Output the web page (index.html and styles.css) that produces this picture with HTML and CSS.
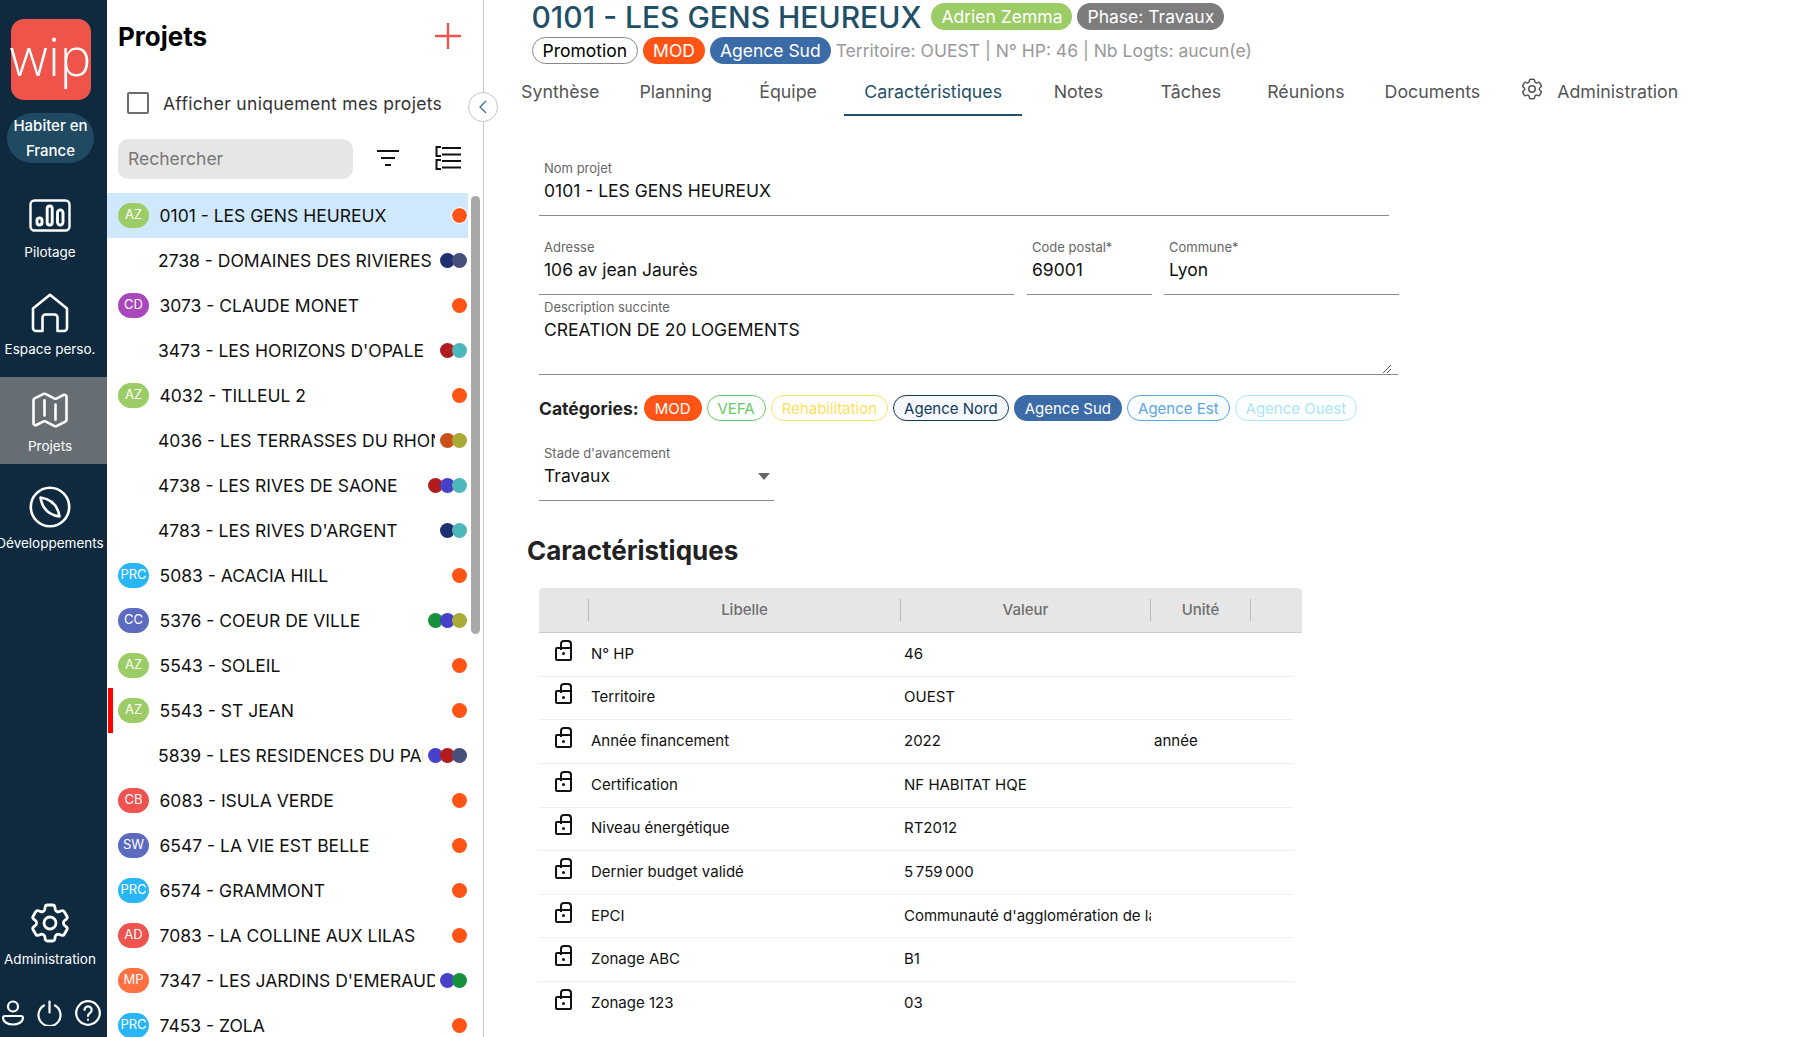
FILE: index.html
```html
<!DOCTYPE html>
<html lang="fr">
<head>
<meta charset="utf-8">
<title>Projets</title>
<link rel="stylesheet" href="styles.css">
</head>
<body>
<div class="app">
  <nav class="rail">
    <div class="logo"><span class="logo-text">wip</span></div>
    <div class="org">Habiter en France</div>
    <a class="rail-item">
      <span class="rail-icon"><svg width="42" height="34" viewBox="0 0 42 34" fill="none" stroke="#fff" stroke-width="2.4"><rect x="1.5" y="1.5" width="39" height="30" rx="4"/><g stroke-width="2.900"><rect x="8" y="19" width="5" height="7" rx="2.500"/><rect x="18.200" y="7" width="5" height="19" rx="2.500"/><rect x="28.500" y="11" width="5.500" height="15" rx="2.700"/></g></svg></span>
      <span class="rail-label">Pilotage</span>
    </a>
    <a class="rail-item">
      <span class="rail-icon"><svg width="38" height="40" viewBox="0 0 38 40" fill="none" stroke="#fff" stroke-width="2.6" stroke-linejoin="round"><path d="M19 1.8 2 15.5V35a3 3 0 0 0 3 3h6.5V24.5a3 3 0 0 1 3-3h9a3 3 0 0 1 3 3V38H33a3 3 0 0 0 3-3V15.5Z"/></svg></span>
      <span class="rail-label">Espace perso.</span>
    </a>
    <a class="rail-item active">
      <span class="rail-icon"><svg width="44" height="44" viewBox="0 0 24 24" fill="none" stroke="#fff" stroke-width="1.4" stroke-linecap="round" stroke-linejoin="round"><path d="M9 6.75V15m6-6v8.25m.503 3.498l4.875-2.437c.381-.19.622-.58.622-1.006V4.82c0-.836-.88-1.38-1.628-1.006l-3.869 1.934c-.317.159-.69.159-1.006 0L9.503 3.252a1.125 1.125 0 00-1.006 0L3.622 5.689C3.24 5.88 3 6.27 3 6.695V19.18c0 .836.88 1.38 1.628 1.006l3.869-1.934c.317-.159.69-.159 1.006 0l4.994 2.497c.317.158.69.158 1.006 0z"/></svg></span>
      <span class="rail-label">Projets</span>
    </a>
    <a class="rail-item">
      <span class="rail-icon"><svg width="42" height="42" viewBox="0 0 42 42" fill="none" stroke="#fff" stroke-width="2.6" stroke-linejoin="round"><circle cx="21" cy="21" r="19.2"/><path d="M11.5 11.5Q28 14 30.500 30.500Q14 28 11.500 11.500Z"/></svg></span>
      <span class="rail-label">Développements</span>
    </a>
    <a class="rail-item rail-admin">
      <span class="rail-icon"><svg width="48" height="48" viewBox="0 0 24 24" fill="none" stroke="#fff" stroke-width="1.4" stroke-linecap="round" stroke-linejoin="round"><path d="M9.594 3.94c.09-.542.56-.94 1.11-.94h2.593c.55 0 1.02.398 1.11.94l.213 1.281c.063.374.313.686.645.87.074.04.147.083.22.127.324.196.72.257 1.075.124l1.217-.456a1.125 1.125 0 011.37.49l1.296 2.247a1.125 1.125 0 01-.26 1.431l-1.003.827c-.293.24-.438.613-.431.992a6.759 6.759 0 010 .255c-.007.378.138.75.43.99l1.005.828c.424.35.534.954.26 1.43l-1.298 2.247a1.125 1.125 0 01-1.369.491l-1.217-.456c-.355-.133-.75-.072-1.076.124a6.57 6.57 0 01-.22.128c-.331.183-.581.495-.644.869l-.213 1.28c-.09.543-.56.941-1.11.941h-2.594c-.55 0-1.02-.398-1.11-.94l-.213-1.281c-.062-.374-.312-.686-.644-.87a6.52 6.52 0 01-.22-.127c-.325-.196-.72-.257-1.076-.124l-1.217.456a1.125 1.125 0 01-1.369-.49l-1.297-2.247a1.125 1.125 0 01.26-1.431l1.004-.827c.292-.24.437-.613.43-.992a6.932 6.932 0 010-.255c.007-.378-.138-.75-.43-.99l-1.004-.828a1.125 1.125 0 01-.26-1.43l1.297-2.247a1.125 1.125 0 011.37-.491l1.216.456c.356.133.751.072 1.076-.124.072-.044.146-.087.22-.128.332-.183.582-.495.644-.869l.214-1.281z"/><path d="M15 12a3 3 0 11-6 0 3 3 0 016 0z"/></svg></span>
      <span class="rail-label">Administration</span>
    </a>
    <div class="rail-bottom">
      <svg width="22" height="26" viewBox="0 0 22 26" fill="none" stroke="#fff" stroke-width="2.2"><circle cx="11" cy="6.500" r="5"/><path d="M3 16h16a2 2 0 0 1 2 2c0 4-5 6.500-10 6.500S1 22 1 18a2 2 0 0 1 2-2Z"/></svg>
      <svg width="25" height="26" viewBox="0 0 25 26" fill="none" stroke="#fff" stroke-width="2.2" stroke-linecap="round"><path d="M7 5.500a11 11 0 1 0 11 0"/><path d="M12.500 1.500v11"/></svg>
      <svg width="26" height="26" viewBox="0 0 26 26" fill="none" stroke="#fff" stroke-width="2.2" stroke-linecap="round"><circle cx="13" cy="13" r="11.800"/><path d="M9.500 10a3.600 3.600 0 1 1 5.500 3c-1.400.9-2 1.400-2 3"/><path d="M13 19.600v.2"/></svg>
    </div>
  </nav>

  <aside class="panel">
    <div class="panel-head">
      <h1 class="panel-title">Projets</h1>
      <svg class="plus" width="28" height="28" viewBox="0 0 28 28" stroke="#ef5350" stroke-width="2.400"><path d="M14 1v26M1 14h26"/></svg>
    </div>
    <label class="mine"><span class="box"></span><span>Afficher uniquement mes projets</span></label>
    <div class="search-row">
      <div class="search">Rechercher</div>
      <svg class="filter" width="22" height="16" viewBox="0 0 22 16" stroke="#111" stroke-width="2"><path d="M0 1h22M4 8h14M8 15h6"/></svg>
      <svg class="listicon" width="26" height="24" viewBox="0 0 26 24" fill="none" stroke="#111" stroke-width="2"><path d="M6 1H1.500v9H6M6 14H1.500v9H6M7 2h19M7 8.500h19M7 15h19M7 21.500h19"/></svg>
    </div>
    <div class="list-wrap">
      <ul class="list">
        <li class="row selected"><span class="av az">AZ</span><span class="name">0101 - LES GENS HEUREUX</span><span class="dots ring"><i class="d or"></i></span></li>
        <li class="row"><span class="av none"></span><span class="name">2738 - DOMAINES DES RIVIERES</span><span class="dots"><i class="d nv"></i><i class="d sl"></i></span></li>
        <li class="row"><span class="av cd">CD</span><span class="name">3073 - CLAUDE MONET</span><span class="dots"><i class="d or"></i></span></li>
        <li class="row"><span class="av none"></span><span class="name">3473 - LES HORIZONS D'OPALE</span><span class="dots"><i class="d cr"></i><i class="d te"></i></span></li>
        <li class="row"><span class="av az">AZ</span><span class="name">4032 - TILLEUL 2</span><span class="dots"><i class="d or"></i></span></li>
        <li class="row"><span class="av none"></span><span class="name">4036 - LES TERRASSES DU RHONE</span><span class="dots"><i class="d ru"></i><i class="d ol"></i></span></li>
        <li class="row"><span class="av none"></span><span class="name">4738 - LES RIVES DE SAONE</span><span class="dots"><i class="d cr"></i><i class="d in"></i><i class="d te"></i></span></li>
        <li class="row"><span class="av none"></span><span class="name">4783 - LES RIVES D'ARGENT</span><span class="dots"><i class="d nv"></i><i class="d te"></i></span></li>
        <li class="row"><span class="av prc">PRC</span><span class="name">5083 - ACACIA HILL</span><span class="dots"><i class="d or"></i></span></li>
        <li class="row"><span class="av cc">CC</span><span class="name">5376 - COEUR DE VILLE</span><span class="dots"><i class="d gr"></i><i class="d in"></i><i class="d ol"></i></span></li>
        <li class="row"><span class="av az">AZ</span><span class="name">5543 - SOLEIL</span><span class="dots"><i class="d or"></i></span></li>
        <li class="row flagged"><span class="av az">AZ</span><span class="name">5543 - ST JEAN</span><span class="dots"><i class="d or"></i></span></li>
        <li class="row"><span class="av none"></span><span class="name">5839 - LES RESIDENCES DU PARC</span><span class="dots"><i class="d in"></i><i class="d cr"></i><i class="d sl"></i></span></li>
        <li class="row"><span class="av cb">CB</span><span class="name">6083 - ISULA VERDE</span><span class="dots"><i class="d or"></i></span></li>
        <li class="row"><span class="av cc">SW</span><span class="name">6547 - LA VIE EST BELLE</span><span class="dots"><i class="d or"></i></span></li>
        <li class="row"><span class="av prc">PRC</span><span class="name">6574 - GRAMMONT</span><span class="dots"><i class="d or"></i></span></li>
        <li class="row"><span class="av cb">AD</span><span class="name">7083 - LA COLLINE AUX LILAS</span><span class="dots"><i class="d or"></i></span></li>
        <li class="row"><span class="av mp">MP</span><span class="name">7347 - LES JARDINS D'EMERAUDE</span><span class="dots"><i class="d in"></i><i class="d gr"></i></span></li>
        <li class="row"><span class="av prc">PRC</span><span class="name">7453 - ZOLA</span><span class="dots"><i class="d or"></i></span></li>
      </ul>
      <div class="thumb"></div>
    </div>
    <button class="collapse"><svg width="10" height="16" viewBox="0 0 10 16" fill="none" stroke="#3f6f8c" stroke-width="1.300"><path d="M8 2 2 8l6 6"/></svg></button>
  </aside>

  <main class="main">
    <header class="head">
      <div class="title-row">
        <h2 class="title">0101 - LES GENS HEUREUX</h2>
        <span class="chip big c-green">Adrien Zemma</span>
        <span class="chip big c-gray">Phase: Travaux</span>
      </div>
      <div class="sub-row">
        <span class="chip big c-outline">Promotion</span>
        <span class="chip big c-orange">MOD</span>
        <span class="chip big c-blue">Agence Sud</span>
        <span class="meta">Territoire: OUEST | N° HP: 46 | Nb Logts: aucun(e)</span>
      </div>
    </header>
    <div class="tabs">
      <a class="tab">Synthèse</a>
      <a class="tab">Planning</a>
      <a class="tab">Équipe</a>
      <a class="tab on">Caractéristiques</a>
      <a class="tab">Notes</a>
      <a class="tab">Tâches</a>
      <a class="tab">Réunions</a>
      <a class="tab">Documents</a>
      <a class="tab tab-admin"><svg width="26" height="26" viewBox="0 0 24 24" fill="none" stroke="#555" stroke-width="1.400" stroke-linecap="round" stroke-linejoin="round"><path d="M9.594 3.94c.09-.542.56-.94 1.11-.94h2.593c.55 0 1.02.398 1.11.94l.213 1.281c.063.374.313.686.645.87.074.04.147.083.22.127.324.196.72.257 1.075.124l1.217-.456a1.125 1.125 0 011.37.49l1.296 2.247a1.125 1.125 0 01-.26 1.431l-1.003.827c-.293.24-.438.613-.431.992a6.759 6.759 0 010 .255c-.007.378.138.75.43.99l1.005.828c.424.35.534.954.26 1.43l-1.298 2.247a1.125 1.125 0 01-1.369.491l-1.217-.456c-.355-.133-.75-.072-1.076.124a6.57 6.57 0 01-.22.128c-.331.183-.581.495-.644.869l-.213 1.28c-.09.543-.56.941-1.11.941h-2.594c-.55 0-1.02-.398-1.11-.94l-.213-1.281c-.062-.374-.312-.686-.644-.87a6.52 6.52 0 01-.22-.127c-.325-.196-.72-.257-1.076-.124l-1.217.456a1.125 1.125 0 01-1.369-.49l-1.297-2.247a1.125 1.125 0 01.26-1.431l1.004-.827c.292-.24.437-.613.43-.992a6.932 6.932 0 010-.255c.007-.378-.138-.75-.43-.99l-1.004-.828a1.125 1.125 0 01-.26-1.43l1.297-2.247a1.125 1.125 0 011.37-.491l1.216.456c.356.133.751.072 1.076-.124.072-.044.146-.087.22-.128.332-.183.582-.495.644-.869l.214-1.281z"/><path d="M15 12a3 3 0 11-6 0 3 3 0 016 0z"/></svg>Administration</a>
    </div>
    <section class="form">
      <div class="form-row r1">
        <div class="field f-name"><span class="lbl">Nom projet</span><span class="val">0101 - LES GENS HEUREUX</span></div>
      </div>
      <div class="form-row r2">
        <div class="field f-addr"><span class="lbl">Adresse</span><span class="val">106 av jean Jaurès</span></div>
        <div class="field f-cp"><span class="lbl">Code postal*</span><span class="val">69001</span></div>
        <div class="field f-city"><span class="lbl">Commune*</span><span class="val">Lyon</span></div>
      </div>
      <div class="form-row r3">
        <div class="field f-desc"><span class="lbl">Description succinte</span><span class="val">CREATION DE 20 LOGEMENTS</span>
          <svg class="grip" width="10" height="10" viewBox="0 0 10 10" stroke="#555" stroke-width="1"><path d="M1 9 9 1M5 9l4-4"/></svg>
        </div>
      </div>
      <div class="cats">
        <strong class="cats-label">Catégories:</strong>
        <span class="chip small c-orange">MOD</span>
        <span class="chip small o-green">VEFA</span>
        <span class="chip small o-yellow">Rehabilitation</span>
        <span class="chip small o-navy">Agence Nord</span>
        <span class="chip small c-blue">Agence Sud</span>
        <span class="chip small o-sky">Agence Est</span>
        <span class="chip small o-cyan">Agence Ouest</span>
      </div>
      <div class="field f-stage"><span class="lbl">Stade d'avancement</span><span class="val">Travaux</span><i class="caret"></i></div>
    </section>
    <h3 class="section-title">Caractéristiques</h3>
    <section class="table">
      <div class="thead">
        <span class="th"></span><span class="th">Libelle</span><span class="th">Valeur</span><span class="th">Unité</span><span class="th last"></span>
      </div>
      <div class="tr"><span class="lock"></span><span class="td">N° HP</span><span class="td">46</span><span class="td"></span></div>
      <div class="tr"><span class="lock"></span><span class="td">Territoire</span><span class="td">OUEST</span><span class="td"></span></div>
      <div class="tr"><span class="lock"></span><span class="td">Année financement</span><span class="td">2022</span><span class="td">année</span></div>
      <div class="tr"><span class="lock"></span><span class="td">Certification</span><span class="td">NF HABITAT HQE</span><span class="td"></span></div>
      <div class="tr"><span class="lock"></span><span class="td">Niveau énergétique</span><span class="td">RT2012</span><span class="td"></span></div>
      <div class="tr"><span class="lock"></span><span class="td">Dernier budget validé</span><span class="td">5&#8239;759&#8239;000</span><span class="td"></span></div>
      <div class="tr"><span class="lock"></span><span class="td">EPCI</span><span class="td">Communauté d'agglomération de la région</span><span class="td"></span></div>
      <div class="tr"><span class="lock"></span><span class="td">Zonage ABC</span><span class="td">B1</span><span class="td"></span></div>
      <div class="tr"><span class="lock"></span><span class="td">Zonage 123</span><span class="td">03</span><span class="td"></span></div>
    </section>
  </main>
</div>
</body>
</html>
```
FILE: styles.css
```css
* { box-sizing: border-box; }
html, body { margin: 0; height: 100%; overflow: hidden; }
body { font-family: Inter, "Noto Sans", sans-serif; color: #111; background: #fff; }
.app { display: flex; height: 1037px; overflow: hidden; }

/* Rail */
.rail { width: 107px; flex: none; background: #0f2a3e; color: #fff; display: flex; flex-direction: column; align-items: stretch; overflow: hidden; padding-top: 19px; }
.logo { width: 80px; height: 81px; margin: 0 0 0 10.500px; background: #ee544a; border-radius: 13px; display: flex; align-items: center; justify-content: center; }
.logo-text { font-family: "Open Sans", sans-serif; font-size: 53px; line-height: 1; font-weight: 300; color: #fff; position: relative; top: -4px; }
.org { width: 87px; height: 50px; margin: 13px 0 0 7px; background: #1f4a62; border-radius: 25px; font-size: 15px; font-weight: 500; line-height: 25px; text-align: center; }
.rail-item { height: 87px; margin-bottom: 10px; display: flex; flex-direction: column; align-items: center; padding: 9px 7px 0 0; }
.org + .rail-item { margin-top: 20px; }
.rail-item.active { background: #666e74; }
.rail-icon { height: 48px; display: flex; align-items: center; justify-content: center; }
.rail-label { margin-top: 4px; font-size: 13.500px; line-height: 16px; white-space: nowrap; color: #fff; }
.rail-admin { margin-top: auto; margin-bottom: 21px; }
.rail-bottom { height: 30px; margin-bottom: 9px; display: flex; align-items: center; padding-left: 2px; gap: 13px; }

/* Panel */
.panel { width: 377px; flex: none; position: relative; border-right: 1.500px solid #c6c6c6; display: flex; flex-direction: column; height: 100%; }
.panel-head { height: 72px; display: flex; align-items: center; justify-content: space-between; padding: 0 21px 0 11px; }
.panel-title { margin: 0; font-size: 26px; font-weight: 700; color: #000; }
.mine { display: flex; align-items: center; gap: 14px; height: 32px; margin-top: 15px; padding-left: 20px; font-size: 17.500px; letter-spacing: .3px; color: #333; }
.box { width: 22px; height: 22px; border: 2px solid #6e6e6e; border-radius: 2px; }
.search-row { display: flex; align-items: center; margin-top: 20px; padding-left: 11px; }
.search { width: 235px; height: 40px; background: #e6e6e6; border-radius: 10px; padding-left: 10px; font-size: 17.500px; line-height: 40px; color: #777; }
.filter { margin: -2px 0 0 24px; }
.listicon { margin: -2px 0 0 36px; }
.list-wrap { position: relative; margin-top: 14px; flex: 1; overflow: hidden; }
.list { list-style: none; margin: 0; padding: 0; width: 361px; }
.row { height: 45px; display: flex; align-items: center; padding: 0 1.500px 0 11px; position: relative; }
.row.selected { background: #cfe8fc; }
.row.flagged::before { content: ""; position: absolute; left: 1px; top: 0; bottom: 0; width: 5px; background: #f00; }
.av { width: 31px; height: 25px; flex: none; border-radius: 12.500px; margin-right: 10.500px; color: #fff; font-size: 13px; line-height: 23px; text-align: center; }
.av.none { background: none; margin-right: 9px; }
.az { background: #9ccc65; }
.cd { background: #ab47bc; }
.prc { background: #29b6f6; }
.cc { background: #5c6bc0; }
.cb { background: #ef5350; }
.mp { background: #ff7043; }
.name { flex: 1; min-width: 0; font-size: 17.500px; white-space: nowrap; overflow: hidden; color: #111; }
.dots { display: flex; flex: none; margin-left: 5px; }
.d { width: 15px; height: 15px; border-radius: 50%; display: block; }
.d + .d { margin-left: -3px; }
.ring .d { outline: 1px solid #fff; }
.or { background: #ff5416; }
.nv { background: #1f2f6f; }
.sl { background: #46507a; }
.cr { background: #b01c20; }
.te { background: #4db8bc; }
.ru { background: #c9501c; }
.ol { background: #a8ab36; }
.in { background: #4740c8; }
.gr { background: #17903f; }
.thumb { position: absolute; left: 364px; top: 3px; width: 9px; height: 438px; background: #a8a8a8; border-radius: 4.500px; }
.collapse { position: absolute; top: 92px; right: -15px; width: 30px; height: 30px; padding: 0; border-radius: 50%; border: 1px solid #c6c6c6; background: #fff; display: flex; align-items: center; justify-content: center; z-index: 2; }

/* Main */
.main { flex: 1; min-width: 0; }
.head { padding-left: 47.500px; }
.title-row { display: flex; align-items: center; gap: 5px; height: 33px; }
.title { margin: 0 5px 0 0; font-size: 30px; font-weight: 500; color: #1f5068; white-space: nowrap; }
.sub-row { display: flex; align-items: center; gap: 5px; height: 28px; margin-top: 3px; }
.chip { display: inline-flex; align-items: center; justify-content: center; border-radius: 14px; white-space: nowrap; border: 1px solid transparent; }
.chip.big { height: 27px; padding: 0 9px; font-size: 17.500px; }
.chip.big.c-outline { padding: 0 10px; }
.chip.small { height: 26px; padding: 0 10px; font-size: 15px; border-radius: 13px; }
.c-green { background: #9ccc65; color: #fff; }
.c-gray { background: #7d7d7d; color: #fff; }
.c-outline { background: #fff; border-color: #888; color: #000; }
.c-orange { background: #ff5416; color: #fff; }
.c-blue { background: #3c6ca8; color: #fff; }
.o-green { border-color: #66cc66; color: #66cc66; }
.o-yellow { border-color: #ffdf5a; color: #ffdf5a; }
.o-navy { border-color: #0e3a5f; color: #0e3a5f; background: #f5f7fa; }
.o-sky { border-color: #5ca6e6; color: #5ca6e6; background: #f9fcff; }
.o-cyan { border-color: #a8e6f5; color: #a8e6f5; }
.meta { margin-left: 0; font-size: 17.500px; color: #999; white-space: nowrap; }
.tabs { display: flex; margin-left: 17px; height: 49px; margin-top: 3px; }
.tab { min-width: 112.500px; padding: 1px 20px 0; height: 49px; display: flex; align-items: center; justify-content: center; font-size: 17.800px; color: #555; white-space: nowrap; border-bottom: 2px solid transparent; }
.tab.on { color: #1f5068; border-bottom-color: #1f5068; }
.tab-admin { gap: 12px; padding-left: 19px; }
.tab-admin svg { margin-top: -4px; }

/* Form */
.form { margin: 44px 0 0 55px; }
.form-row { display: flex; }
.field { position: relative; display: flex; flex-direction: column; border-bottom: 1.500px solid #8a8a8a; padding: 0 5px; }
.lbl { font-size: 13px; line-height: 16px; color: #666; }
.val { font-size: 17.500px; line-height: 24px; margin-top: 3px; color: #111; }
.r1 .field { width: 850px; height: 56px; }
.r2 { margin-top: 22px; gap: 12px; }
.r2 .field { height: 57px; padding-top: 1px; }
.f-addr { width: 475px; }
.f-cp { width: 125px; margin-left: 1px; }
.f-city { width: 235px; }
.r3 { margin-top: 4px; }
.f-desc { width: 859px; height: 76px; }
.grip { position: absolute; right: 6px; bottom: 0; }
.cats { display: flex; align-items: center; gap: 5px; margin-top: 20px; height: 26px; }
.cats-label { font-size: 17.500px; font-weight: 700; color: #222; }
.f-stage { width: 235px; height: 56px; margin-top: 24px; }
.caret { position: absolute; right: 4px; top: 28px; width: 0; height: 0; border-left: 6.500px solid transparent; border-right: 6.500px solid transparent; border-top: 7px solid #666; }
.section-title { margin: 33px 0 0 43px; font-size: 26px; font-weight: 700; line-height: 34px; color: #222; }

/* Table */
.table { margin: 20px 0 0 55px; width: 763px; }
.thead { height: 45px; display: grid; grid-template-columns: 50px 312px 250px 100px 1fr; align-items: center; background: #e6e6e6; border-bottom: 1.500px solid #ccc; border-radius: 4px 4px 0 0; }
.th { height: 22px; line-height: 22px; text-align: center; font-size: 15px; font-weight: 500; color: #6e6e6e; border-right: 1.500px solid #bbb; }
.th.last { border-right: 0; }
.tr { width: 754px; height: 43.650px; padding-bottom: 2px; display: grid; grid-template-columns: 49px 313px 250px 142px; align-items: center; border-bottom: 1.500px solid #efefef; }
.tr:last-child { border-bottom: 0; }
.td { font-size: 15px; padding-left: 3px; color: #111; white-space: nowrap; overflow: hidden; }
.lock { justify-self: start; margin: 1px 0 0 16px; width: 17px; height: 14px; border: 2px solid #111; border-radius: 2px; position: relative; display: block; }
.lock::before { content: ""; position: absolute; left: 2.500px; top: -9px; width: 8px; height: 8px; border: 2px solid #111; border-bottom: 0; border-radius: 4px 4px 0 0; }
.lock::after { content: ""; position: absolute; left: 5px; top: 3.500px; width: 3px; height: 3px; background: #111; border-radius: 50%; }
```
